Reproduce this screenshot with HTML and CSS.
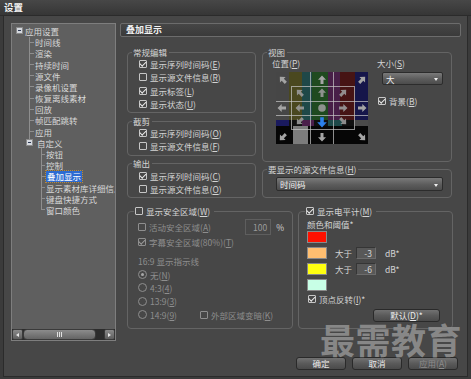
FILE: index.html
```html
<!DOCTYPE html>
<html lang="zh-CN">
<head>
    <meta charset="UTF-8">
    <meta name="viewport" content="width=device-width, initial-scale=1.0">
    <title>设置</title>
    <link rel="stylesheet" href="styles.css">
</head>
<body>
<div class="window">
    <div class="titlebar">设置</div>
    <div class="main">
        <div class="tree-panel">
            <div class="tree">
                <div class="node root"><span class="exp"></span>应用设置</div>
                <div class="node l1">时间线</div>
                <div class="node l1">渲染</div>
                <div class="node l1">持续时间</div>
                <div class="node l1">源文件</div>
                <div class="node l1">录像机设置</div>
                <div class="node l1">恢复离线素材</div>
                <div class="node l1">回放</div>
                <div class="node l1">帧匹配跳转</div>
                <div class="node l1">应用</div>
                <div class="node l1 last"><span class="exp"></span>自定义</div>
                <div class="node l2">按钮</div>
                <div class="node l2">控制</div>
                <div class="node l2"><span class="sel">叠加显示</span></div>
                <div class="node l2">显示素材库详细信息</div>
                <div class="node l2">键盘快捷方式</div>
                <div class="node l2 last">窗口颜色</div>
            </div>
            <div class="hscroll">
                <span class="sb-btn sb-left"></span>
                <span class="sb-thumb"></span>
                <span class="sb-track"></span>
                <span class="sb-btn sb-right"></span>
            </div>
        </div>

        <div class="content">
            <div class="page-head">叠加显示</div>

            <div class="row-top">
                <div class="col-left">
                    <fieldset class="grp g-edit">
                        <legend>常规编辑</legend>
                        <div class="grp-body">
                            <div class="opt"><span class="cb on"></span>显示序列时间码(<u>E</u>)</div>
                            <div class="opt"><span class="cb"></span>显示源文件信息(<u>R</u>)</div>
                            <div class="opt"><span class="cb on"></span>显示标签(<u>L</u>)</div>
                            <div class="opt"><span class="cb on"></span>显示状态(<u>U</u>)</div>
                        </div>
                    </fieldset>
                    <fieldset class="grp g-cut">
                        <legend>截剪</legend>
                        <div class="grp-body">
                            <div class="opt"><span class="cb on"></span>显示序列时间码(<u>O</u>)</div>
                            <div class="opt"><span class="cb"></span>显示源文件信息(<u>F</u>)</div>
                        </div>
                    </fieldset>
                    <fieldset class="grp g-out">
                        <legend>输出</legend>
                        <div class="grp-body">
                            <div class="opt"><span class="cb on"></span>显示序列时间码(<u>C</u>)</div>
                            <div class="opt"><span class="cb"></span>显示源文件信息(<u>O</u>)</div>
                        </div>
                    </fieldset>
                </div>

                <div class="col-right">
                    <fieldset class="grp g-view">
                        <legend>视图</legend>
                        <div class="view-body">
                            <div class="view-pos">
                                <div class="lbl">位置(<u>P</u>)</div>
                                <svg class="posgrid" width="92" height="72" viewBox="0 0 92 72">
                                    <defs>
                                        <path id="arw" d="M0 -4.5L4 -0.3H1.5V4H-1.5V-0.3H-4Z"/>
                                    </defs>
                                    <rect x="0" width="13" height="48" fill="#464646"/>
                                    <rect x="13" width="13" height="48" fill="#4a481f"/>
                                    <rect x="26" width="10" height="48" fill="#1f4848"/>
                                    <rect x="36" width="16" height="48" fill="#1f4a1f"/>
                                    <rect x="52" width="12" height="48" fill="#481f48"/>
                                    <rect x="64" width="15" height="48" fill="#461414"/>
                                    <rect x="79" width="13" height="48" fill="#16164a"/>
                                    <rect y="48" width="92" height="6" fill="#101010"/>
                                    <rect y="48" width="13" height="6" fill="#1a1a5e"/>
                                    <rect x="26" y="48" width="12" height="6" fill="#4a1e4a"/>
                                    <rect x="52" y="48" width="14" height="6" fill="#1e4a4a"/>
                                    <rect x="79" y="48" width="13" height="6" fill="#4a4a4a"/>
                                    <rect y="54" width="92" height="18" fill="#060606"/>
                                    <rect x="17" y="54" width="15" height="18" fill="#7c7c7c"/>
                                    <g stroke="#c8c8c8" stroke-opacity="0.7" stroke-width="1" fill="none">
                                        <path d="M34.5 0V72M57.5 0V72M0 29.5H92M0 43.5H92"/>
                                        <rect x="15.5" y="14.5" width="63" height="43"/>
                                    </g>
                                    <g fill="#a4a4a4">
                                        <use href="#arw" transform="translate(7 8) rotate(-45)"/>
                                        <use href="#arw" transform="translate(46 8)"/>
                                        <use href="#arw" transform="translate(86 8) rotate(45)"/>
                                        <use href="#arw" transform="translate(6 36) rotate(-90)"/>
                                        <use href="#arw" transform="translate(86 36) rotate(90)"/>
                                        <use href="#arw" transform="translate(7 65) rotate(-135)"/>
                                        <use href="#arw" transform="translate(46 65) rotate(180)"/>
                                        <use href="#arw" transform="translate(86 65) rotate(135)"/>
                                    </g>
                                    <g fill="#9a9a9a" fill-opacity="0.9">
                                        <use href="#arw" transform="translate(24 21) rotate(-45)"/>
                                        <use href="#arw" transform="translate(46 21)"/>
                                        <use href="#arw" transform="translate(67 21) rotate(45)"/>
                                        <use href="#arw" transform="translate(24 36) rotate(-90)"/>
                                        <circle cx="46" cy="36" r="3.8"/>
                                        <use href="#arw" transform="translate(67 36) rotate(90)"/>
                                        <use href="#arw" transform="translate(24 49) rotate(-135)"/>
                                        <use href="#arw" transform="translate(67 49) rotate(135)"/>
                                    </g>
                                    <use href="#arw" fill="#2b80ec" transform="translate(46 50) rotate(180) scale(1.2)"/>
                                </svg>
                            </div>
                            <div class="view-size">
                                <div class="lbl">大小(<u>S</u>)</div>
                                <div class="dropdown dd-size">大<span class="caret"></span></div>
                                <div class="opt opt-bg"><span class="cb on"></span>背景(<u>B</u>)</div>
                            </div>
                        </div>
                    </fieldset>
                    <fieldset class="grp g-src">
                        <legend>要显示的源文件信息(<u>H</u>)</legend>
                        <div class="dropdown dd-src">时间码<span class="caret"></span></div>
                    </fieldset>
                </div>
            </div>

            <div class="row-bottom">
                <fieldset class="grp g-safe">
                    <legend class="legend-cb"><span class="cb"></span>显示安全区域(<u>W</u>)</legend>
                    <div class="grp-body">
                        <div class="opt dis opt-action">
                            <span class="cb"></span>活动安全区域(<u>A</u>)
                            <span class="num num-off">100</span>
                            <span class="pct">%</span>
                        </div>
                        <div class="opt dis opt-title"><span class="cb on"></span>字幕安全区域(80%)(<u>T</u>)</div>
                        <div class="opt dis opt-head">16:9 显示指示线</div>
                        <div class="opt dis rad-row"><span class="rad on"></span>无(<u>N</u>)</div>
                        <div class="opt dis rad-row"><span class="rad"></span>4:3(<u>4</u>)</div>
                        <div class="opt dis rad-row"><span class="rad"></span>13:9(<u>3</u>)</div>
                        <div class="opt dis rad-row"><span class="rad"></span>14:9(<u>9</u>)
                            <span class="dim"><span class="cb"></span>外部区域变暗(<u>K</u>)</span>
                        </div>
                    </div>
                </fieldset>

                <fieldset class="grp g-meter">
                    <legend class="legend-cb"><span class="cb on"></span>显示电平计(<u>M</u>)</legend>
                    <div class="grp-body meter-body">
                        <div class="opt meter-head">颜色和阈值*</div>
                        <div class="swatch-row"><span class="swatch sw-red"></span></div>
                        <div class="swatch-row"><span class="swatch sw-orange"></span><span class="gt">大于</span><span class="num">-3</span><span class="db">dB*</span></div>
                        <div class="swatch-row"><span class="swatch sw-yellow"></span><span class="gt">大于</span><span class="num">-6</span><span class="db">dB*</span></div>
                        <div class="swatch-row"><span class="swatch sw-mint"></span></div>
                        <div class="opt opt-peak"><span class="cb on"></span>顶点反转(<u>I</u>)*</div>
                        <button class="btn btn-default">默认(<u>D</u>)*</button>
                    </div>
                </fieldset>
            </div>

            <div class="btn-row">
                <button class="btn">确定</button>
                <button class="btn">取消</button>
                <button class="btn btn-off">应用(<u>A</u>)</button>
            </div>
        </div>
    </div>
    <div class="watermark">最需教育</div>
</div>
</body>
</html>
```

FILE: styles.css
```css
*{
    margin: 0;
    padding: 0;
    box-sizing: border-box;
}
body{
    width: 471px;
    height: 379px;
    overflow: hidden;
    background-color: #262626;
    font-family: "Noto Sans CJK SC", "Noto Sans", sans-serif;
    font-size: 8.5px;
    color: #d4d4d4;
}
u{
    text-underline-offset: 1px;
}
.window{
    position: relative;
    width: 471px;
    height: 379px;
    display: flex;
    flex-direction: column;
    background-color: #3b3b3b;
}
.titlebar{
    height: 16px;
    padding-left: 4px;
    line-height: 15px;
    font-size: 9.5px;
    font-weight: bold;
    color: #f4f4f4;
    background: linear-gradient(#474747, #363636);
    border-bottom: 1px solid #2b2b2b;
}
.main{
    flex: 1;
    display: flex;
    align-items: flex-start;
    margin: 0 3px 2px 3px;
    padding: 7px 6px 0 7px;
    background-color: #474747;
    border: 1px solid #2b2b2b;
    border-top: none;
}

/* tree */
.tree-panel{
    width: 105px;
    height: 318px;
    display: flex;
    flex-direction: column;
    background-color: #5f5f5f;
    border: 1px solid #7e7e7e;
    overflow: hidden;
}
.tree{
    flex: 1;
    padding-top: 1.4px;
    white-space: nowrap;
    overflow: hidden;
}
.node{
    height: 11.2px;
    display: flex;
    align-items: center;
    color: #d8d8d8;
    --ln: #8e8e8e;
}
.root{
    padding-left: 4px;
}
.exp{
    width: 7px;
    height: 7px;
    margin-right: 2px;
    flex: none;
    border: 1px solid #8a8a8a;
    background: linear-gradient(#2e3a55, #2e3a55) center / 3px 1px no-repeat, #d4d8de;
}
.l1{
    padding-left: 23px;
    background:
        linear-gradient(var(--ln), var(--ln)) 17px 0 / 1px 100% no-repeat,
        linear-gradient(var(--ln), var(--ln)) 17px 50% / 5px 1px no-repeat;
}
.l1.last{
    padding-left: 14px;
    background: linear-gradient(var(--ln), var(--ln)) 17px 0 / 1px 50% no-repeat;
}
.l1.last .exp{
    margin-right: 4px;
}
.l2{
    padding-left: 34px;
    background:
        linear-gradient(var(--ln), var(--ln)) 29px 0 / 1px 100% no-repeat,
        linear-gradient(var(--ln), var(--ln)) 29px 50% / 4px 1px no-repeat;
}
.l2.last{
    background:
        linear-gradient(var(--ln), var(--ln)) 29px 0 / 1px 50% no-repeat,
        linear-gradient(var(--ln), var(--ln)) 29px 50% / 4px 1px no-repeat;
}
.sel{
    padding: 0 1px;
    line-height: 11px;
    background-color: #2c6bd2;
    color: #ffffff;
    outline: 1px dotted #b88a3c;
}
.hscroll{
    height: 11px;
    display: flex;
    background-color: #2c2c2c;
}
.sb-btn{
    width: 11px;
    display: flex;
    align-items: center;
    justify-content: center;
    background: linear-gradient(#8a8a8a, #5e5e5e);
    border: 1px solid #3a3a3a;
    border-radius: 2px;
}
.sb-btn::after{
    content: "";
    border-top: 2.5px solid transparent;
    border-bottom: 2.5px solid transparent;
}
.sb-left::after{
    border-right: 3px solid #e8e8e8;
}
.sb-right::after{
    border-left: 3px solid #e8e8e8;
}
.sb-thumb{
    width: 73px;
    display: flex;
    align-items: center;
    justify-content: center;
    background: linear-gradient(#8c8c8c, #646464);
    border: 1px solid #3a3a3a;
    border-radius: 4px;
}
.sb-thumb::after{
    content: "";
    width: 5px;
    height: 5px;
    background: repeating-linear-gradient(90deg, #e0e0e0 0 1px, transparent 1px 2px);
}
.sb-track{
    flex: 1;
}

/* right side */
.content{
    width: 341px;
    margin-left: 4px;
    display: flex;
    flex-direction: column;
}
.page-head{
    height: 14px;
    padding-left: 5px;
    line-height: 12px;
    font-size: 9px;
    font-weight: bold;
    color: #f2f2f2;
    background: linear-gradient(#464646, #3a3a3a);
    border: 1px solid #6c6c6c;
    border-radius: 2px;
}
.row-top{
    margin-top: 10px;
    padding-left: 7px;
    display: flex;
    gap: 6px;
}
.col-left{
    width: 129px;
    display: flex;
    flex-direction: column;
}
.col-right{
    width: 190px;
    display: flex;
    flex-direction: column;
}
.grp{
    min-width: 0;
    border: 1px solid #646464;
    border-radius: 4px;
}
.grp legend{
    margin-left: 4px;
    padding: 0 2px 0 1px;
    line-height: 10px;
    color: #d4d4d4;
    white-space: nowrap;
}
.grp legend.legend-cb{
    margin-left: 6px;
    padding: 0 4px 0 1px;
    line-height: 12px;
    display: flex;
    align-items: center;
}
.opt{
    height: 13.5px;
    display: flex;
    align-items: center;
    white-space: nowrap;
}
.cb{
    width: 8px;
    height: 8px;
    margin-right: 3px;
    flex: none;
    display: inline-flex;
    align-items: center;
    justify-content: center;
    border: 1px solid #c6c6c6;
    border-radius: 1px;
}
.cb.on::after{
    content: "";
    width: 2.5px;
    height: 5px;
    border: solid #ececec;
    border-width: 0 1.3px 1.3px 0;
    transform: translate(0, -1px) rotate(45deg);
}
.dis{
    color: #8e8e8e;
}
.dis .cb{
    border-color: #8e8e8e;
}
.dis .cb.on::after{
    border-color: #9a9a9a;
}

.g-edit{
    height: 66px;
}
.g-edit .grp-body{
    padding-left: 11px;
}
.g-cut,
.g-out{
    height: 40px;
    margin-top: 3px;
}
.g-out{
    margin-top: 2px;
}
.g-cut .grp-body{
    padding: 1px 0 0 11px;
}
.g-out .grp-body{
    padding: 2px 0 0 11px;
}
.g-cut .opt,
.g-out .opt{
    height: 12.5px;
}

.g-view{
    height: 115px;
}
.view-body{
    display: flex;
    padding-left: 9px;
}
.lbl{
    height: 12px;
    line-height: 12px;
    white-space: nowrap;
}
.posgrid{
    display: block;
    margin: 3px 0 0 4px;
}
.view-size{
    margin-left: 9px;
}
.dropdown{
    height: 13px;
    display: flex;
    align-items: center;
    justify-content: space-between;
    padding: 0 4px 0 3px;
    color: #f2f2f2;
    background: linear-gradient(#7a7a7a, #5c5c5c 55%, #4c4c4c);
    border: 1px solid #2c2c2c;
    border-radius: 2px;
}
.caret{
    border-left: 2.5px solid transparent;
    border-right: 2.5px solid transparent;
    border-top: 3px solid #eeeeee;
    margin-top: 2px;
}
.dd-size{
    width: 61px;
    margin: 3px 0 0 5px;
}
.opt-bg{
    height: 12px;
    margin: 10px 0 0 1px;
}
.g-src{
    height: 34px;
    margin-top: 2px;
}
.dd-src{
    width: 167px;
    height: 14px;
    margin: 3px 0 0 13px;
}

.row-bottom{
    margin-top: 7px;
    padding-left: 7px;
    display: flex;
}
.g-safe{
    width: 166px;
    height: 124px;
}
.g-safe .grp-body{
    padding: 1px 8px 0 10px;
}
.opt-action{
    height: 17px;
}
.num{
    height: 12px;
    width: 20px;
    padding-right: 3px;
    text-align: right;
    line-height: 10px;
    color: #d6d6d6;
    background-color: #585858;
    border: 1px solid;
    border-color: #353535 #6c6c6c #6c6c6c #353535;
}
.num-off{
    width: 26px;
    height: 16px;
    line-height: 14px;
    margin-left: auto;
    color: #9a9a9a;
    background-color: #474747;
    border-color: #5e5e5e;
}
.pct{
    margin-left: 5px;
    color: #d4d4d4;
}
.opt-title{
    height: 12px;
    margin-top: 1px;
}
.opt-head{
    height: 12px;
    margin-top: 7px;
}
.rad-row{
    height: 13.3px;
}
.opt-head + .rad-row{
    margin-top: 1px;
}
.rad{
    width: 9px;
    height: 9px;
    margin-right: 3px;
    flex: none;
    display: inline-flex;
    align-items: center;
    justify-content: center;
    border: 1px solid #8e8e8e;
    border-radius: 50%;
}
.rad.on::after{
    content: "";
    width: 3px;
    height: 3px;
    border-radius: 50%;
    background-color: #a8a8a8;
}
.dim{
    margin-left: 23px;
    display: flex;
    align-items: center;
}

.g-meter{
    width: 155px;
    height: 124px;
    margin-left: 5px;
}
.meter-body{
    display: flex;
    flex-direction: column;
    padding: 1px 0 0 8px;
}
.meter-head{
    height: 11px;
}
.swatch-row{
    height: 16px;
    display: flex;
    align-items: center;
    white-space: nowrap;
}
.swatch{
    width: 20px;
    height: 12px;
    border: 1px solid #8a8a8a;
}
.sw-red{ background-color: #ff1100; }
.sw-orange{ background-color: #ffbe70; }
.sw-yellow{ background-color: #ffff10; }
.sw-mint{ background-color: #c8ffe6; }
.gt{
    margin-left: 8px;
    width: 21px;
}
.db{
    margin-left: 9px;
}
.opt-peak{
    height: 12px;
    margin-left: 1px;
}

.btn{
    width: 50px;
    height: 13px;
    font-family: inherit;
    font-size: 8.5px;
    line-height: 11px;
    color: #ececec;
    background: linear-gradient(#727272, #5a5a5a 50%, #4a4a4a);
    border: 1px solid #2a2a2a;
    border-radius: 3px;
}
.btn-off{
    color: #8c8c8c;
}
.btn-default{
    width: 67px;
    margin: 4px 12px 0 0;
    align-self: flex-end;
}
.btn-row{
    margin-top: 28px;
    padding-right: 3px;
    display: flex;
    justify-content: flex-end;
    gap: 6px;
}

.watermark{
    position: absolute;
    left: 320px;
    top: 324px;
    font-size: 35px;
    font-weight: bold;
    line-height: 30px;
    letter-spacing: 0.5px;
    color: rgba(145, 145, 145, 0.88);
    white-space: nowrap;
}
```
